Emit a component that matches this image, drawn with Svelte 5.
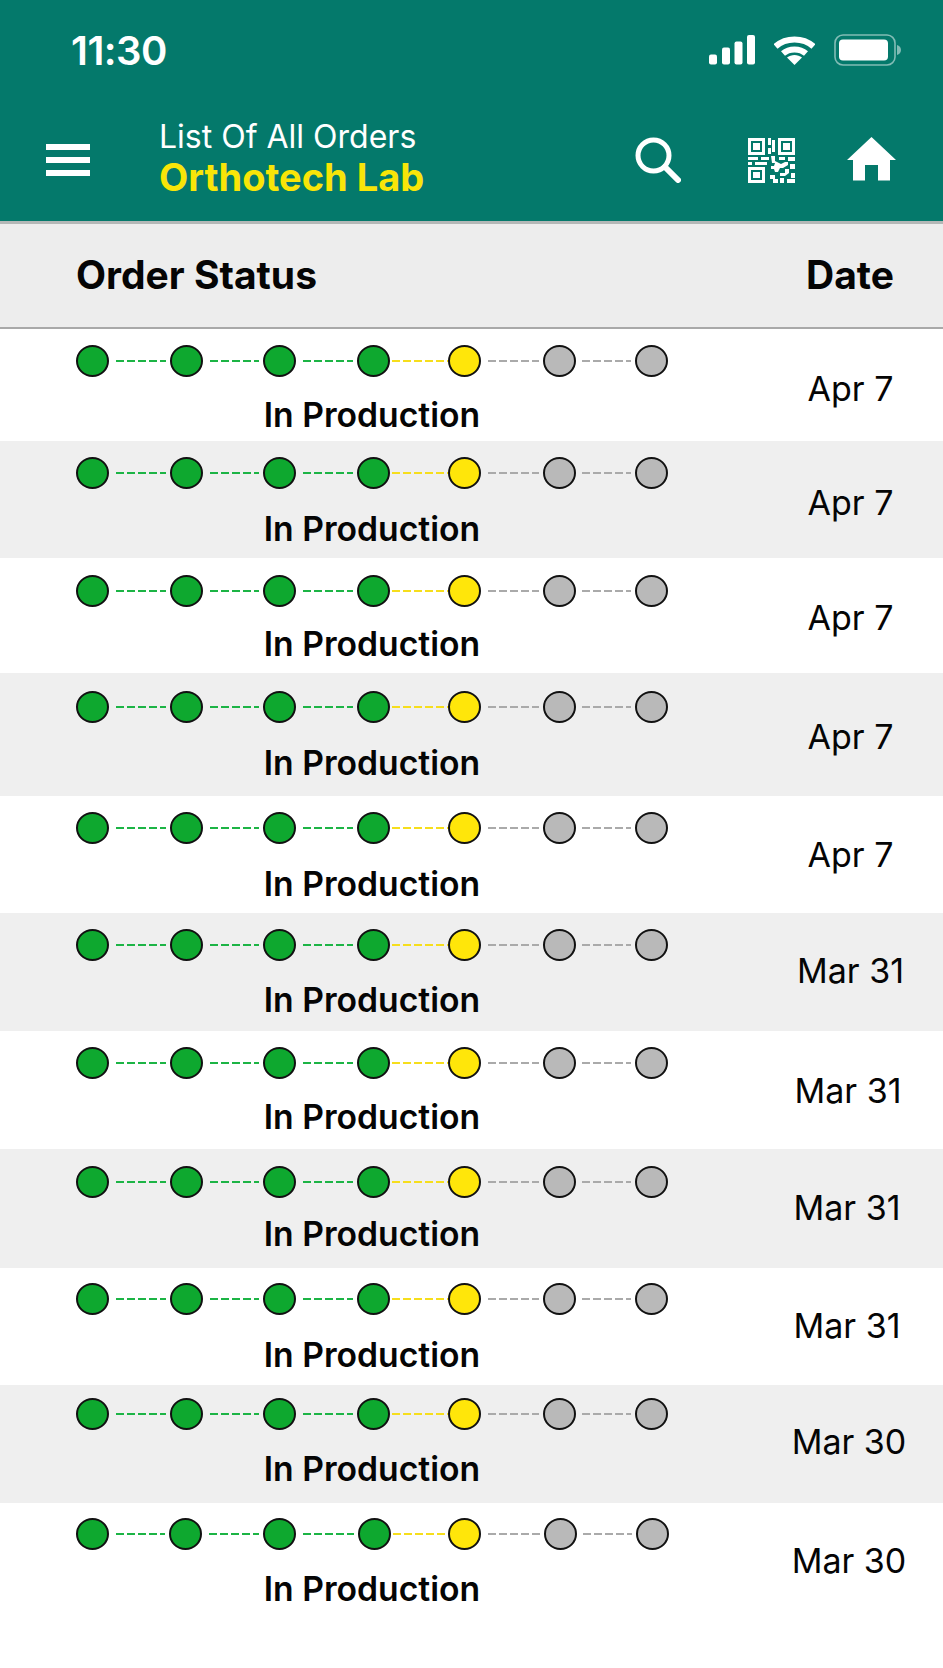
<script>
  const green = 'green', yellow = 'yellow', grey = 'grey';
  const dots = [green, green, green, green, yellow, grey, grey];
  const links = [
    { kind: green, w: 50, l: 7, r: 4 },
    { kind: green, w: 49, l: 7, r: 4 },
    { kind: green, w: 50, l: 7, r: 4 },
    { kind: yellow, w: 56, l: 2, r: 0 },
    { kind: grey, w: 51, l: 7, r: 4 },
    { kind: grey, w: 49, l: 6, r: 4 }
  ];
  // The last row's stepper sits a touch wider in the source capture.
  const lastLinks = [
    { kind: green, w: 49, l: 7, r: 4 },
    { kind: green, w: 50, l: 7, r: 4 },
    { kind: green, w: 51, l: 7, r: 4 },
    { kind: yellow, w: 55, l: 2, r: 0 },
    { kind: grey, w: 52, l: 7, r: 4 },
    { kind: grey, w: 49, l: 6, r: 4 }
  ];
  // h: row height, dot: stepper offset, label: stepper-to-label distance,
  // dateY: centre of the date from row top, dx: horizontal drift of the date
  const rows = [
    { h: 112, dot: 16, label: 54, date: 'Apr 7', dateY: 60, dx: 0.5 },
    { h: 117, dot: 16, label: 56, date: 'Apr 7', dateY: 62, dx: 0.5 },
    { h: 115, dot: 17, label: 53, date: 'Apr 7', dateY: 60, dx: 0.5 },
    { h: 123, dot: 18, label: 56, date: 'Apr 7', dateY: 64, dx: 0.5 },
    { h: 117, dot: 16, label: 56, date: 'Apr 7', dateY: 59, dx: 0.5 },
    { h: 118, dot: 16, label: 55, date: 'Mar 31', dateY: 58, dx: 0.5 },
    { h: 118, dot: 16, label: 54, date: 'Mar 31', dateY: 60, dx: -2 },
    { h: 119, dot: 17, label: 52, date: 'Mar 31', dateY: 59, dx: -3 },
    { h: 117, dot: 15, label: 56, date: 'Mar 31', dateY: 58, dx: -3 },
    { h: 118, dot: 13, label: 55, date: 'Mar 30', dateY: 57, dx: -1 },
    { h: 165, dot: 15, label: 55, date: 'Mar 30', dateY: 58, dx: -1 }
  ];
  const DOT_H = 32;
  const LABEL_LH = 40;
  const DATE_LH = 44;
</script>

<div class="page">
  <header class="appbar">
    <div class="statusbar">
      <span class="time">11:30</span>
      <div class="sysicons">
        <svg class="signal" width="46" height="30" viewBox="0 0 46 30" aria-hidden="true">
          <rect x="0" y="19.5" width="8" height="10" rx="2" />
          <rect x="13" y="12.5" width="8" height="17" rx="2" />
          <rect x="25.5" y="6.5" width="8" height="23" rx="2" />
          <rect x="38" y="0" width="8" height="29.5" rx="2" />
        </svg>
        <svg class="wifi" width="41" height="30" viewBox="0 0 41 30" aria-hidden="true">
          <path d="M1.500 11.500C11.800 2 29.200 2 39.500 11.500" fill="none" stroke="#fff" stroke-width="6" />
          <path d="M9 18.500C15.200 13 25.800 13 32 18.500" fill="none" stroke="#fff" stroke-width="6" />
          <path d="M13 22.500C17.200 19 23.800 19 28 22.500L20.500 30Z" fill="#fff" />
        </svg>
        <svg class="battery" width="67" height="32" viewBox="0 0 67 32" aria-hidden="true">
          <rect x="1" y="1" width="60" height="30" rx="8" fill="none" stroke="#fff" stroke-opacity=".5" stroke-width="1.6" />
          <rect x="5" y="5.500" width="49" height="21" rx="4" fill="#fff" />
          <path d="M63 11c2.400.6 4 2.600 4 5s-1.600 4.400-4 5Z" fill="#fff" fill-opacity=".5" />
        </svg>
      </div>
    </div>
    <nav class="navbar">
      <div class="burger" aria-label="Menu"><i></i><i></i><i></i></div>
      <div class="titles">
        <div class="title">List Of All Orders</div>
        <div class="subtitle">Orthotech Lab</div>
      </div>
      <div class="actions">
        <svg class="search" width="46" height="46" viewBox="0 0 46 46" aria-hidden="true">
          <circle cx="18.500" cy="18.500" r="15.500" fill="none" stroke="#fff" stroke-width="5" />
          <path d="M30 30L43 43" fill="none" stroke="#fff" stroke-width="6" stroke-linecap="round" />
        </svg>
        <svg class="qr" width="48" height="46" viewBox="0 0 48 46" fill="#fff" aria-hidden="true">
          <path fill-rule="evenodd" d="M1 1h17v17H1ZM4 4v11h11V4Z" />
          <rect x="6" y="6" width="7" height="7" />
          <path fill-rule="evenodd" d="M31 1h17v17H31ZM34 4v11h11V4Z" />
          <rect x="36" y="6" width="7" height="7" />
          <path fill-rule="evenodd" d="M1 30h17v16H1ZM4 33v10h11V33Z" />
          <rect x="6" y="35" width="7" height="6" />
          <rect x="21" y="1" width="3" height="7" />
          <rect x="25" y="3" width="3" height="12" />
          <rect x="21" y="11" width="3" height="6" />
          <rect x="1" y="20" width="10" height="3" />
          <rect x="14" y="20" width="8" height="3" />
          <rect x="1" y="25" width="4" height="3" />
          <rect x="8" y="25" width="12" height="3" />
          <path d="M24 19h4v5l6 3 4-2h3v3l-5 3h-3l-2 4h-3l-1-3h-3v-3h3l1-3h-3Z" />
          <rect x="32" y="20" width="6" height="3" />
          <rect x="41" y="20" width="7" height="4" />
          <rect x="43" y="27" width="5" height="5" />
          <path d="M38 32h4v4l-4 3h-5v-3h5Z" />
          <rect x="23" y="38" width="5" height="4" />
          <rect x="26" y="42" width="5" height="4" />
          <rect x="33" y="41" width="4" height="5" />
          <rect x="40" y="42" width="8" height="4" />
          <rect x="44" y="36" width="4" height="5" />
        </svg>
        <svg class="home" width="49" height="44" viewBox="0 0 49 44" fill="#fff" aria-hidden="true">
          <path d="M24.500 0L49 23H43V43.500H31V28H18V43.500H6V23H0Z" />
        </svg>
      </div>
    </nav>
  </header>

  <div class="tablehead">
    <span class="th-status">Order Status</span>
    <span class="th-date">Date</span>
  </div>

  {#each rows as row, r}
    {@const rowLinks = r === rows.length - 1 ? lastLinks : links}
    <div class="row" style="height:{row.h}px">
      <div class="status" style="padding-top:{row.dot}px">
        <div class="stepper">
          {#each dots as kind, i}
            <span class="dot {kind}"></span>
            {#if i < rowLinks.length}
              <span
                class="link {rowLinks[i].kind}"
                style="width:{rowLinks[i].w}px;margin:0 {rowLinks[i].r}px 0 {rowLinks[i].l}px"
              ></span>
            {/if}
          {/each}
        </div>
        <div class="label" style="margin-top:{row.label - DOT_H / 2 - LABEL_LH / 2}px">In Production</div>
      </div>
      <div class="datecell">
        <span class="date" style="margin:{row.dateY - DATE_LH / 2}px 0 0 {row.dx * 2}px">{row.date}</span>
      </div>
    </div>
  {/each}
</div>

<style>
  :global(body) {
    margin: 0;
    background: #fff;
  }
  .page {
    width: 943px;
    height: 1668px;
    overflow: hidden;
    font-family: Inter, "Liberation Sans", sans-serif;
    color: #050505;
  }
  .appbar {
    height: 221px;
    background: #04796b;
    border-bottom: 3px solid #b4b8b7;
    color: #fff;
  }
  .statusbar {
    height: 100px;
    display: flex;
    justify-content: space-between;
    align-items: flex-start;
    padding: 29px 42px 0 71px;
    box-sizing: border-box;
  }
  .time {
    font-size: 40px;
    line-height: 44px;
    font-weight: 600;
    letter-spacing: -0.5px;
  }
  .sysicons {
    display: flex;
    align-items: flex-start;
    padding-top: 5px;
  }
  .signal {
    fill: #fff;
    margin-right: 19px;
    margin-top: 1px;
  }
  .wifi {
    margin-right: 19px;
    margin-top: 1px;
  }
  .navbar {
    height: 121px;
    display: flex;
    align-items: flex-start;
  }
  .burger {
    width: 44px;
    margin: 44px 0 0 46px;
    display: flex;
    flex-direction: column;
    gap: 7px;
  }
  .burger i {
    display: block;
    height: 6px;
    background: #fff;
  }
  .titles {
    margin: 17px 0 0 69px;
    width: 380px;
  }
  .title {
    font-size: 32px;
    line-height: 40px;
    font-weight: 400;
  }
  .subtitle {
    font-size: 38px;
    line-height: 40px;
    font-weight: 700;
    color: #f8e508;
  }
  .actions {
    display: flex;
    align-items: flex-start;
    padding-top: 37px;
    margin-left: 96px;
  }
  .search {
    margin-right: 66px;
  }
  .qr {
    margin-right: 52px;
  }
  .tablehead {
    height: 103px;
    background: #ededed;
    border-bottom: 2px solid #a9a9a9;
    display: flex;
    justify-content: space-between;
    align-items: center;
    padding: 0 49px 2px 76px;
    font-size: 39px;
    font-weight: 700;
    margin-bottom: 0;
    height: 101px;
  }
  .row {
    display: flex;
    background: #fff;
  }
  .row:nth-of-type(odd) {
    background: #efefef;
  }
  .status {
    width: 592px;
    margin-left: 76px;
    box-sizing: border-box;
  }
  .stepper {
    display: flex;
    align-items: center;
    height: 32px;
  }
  .dot {
    flex: none;
    width: 33px;
    height: 32px;
    border: 2px solid #111;
    border-radius: 50%;
    box-sizing: border-box;
  }
  .dot.green {
    background: #0ea82f;
  }
  .dot.yellow {
    background: #ffe60a;
  }
  .dot.grey {
    background: #b9b9b9;
  }
  .link {
    flex: none;
    height: 2px;
  }
  .link.green {
    background: repeating-linear-gradient(90deg, #1cb445 0 8px, transparent 8px 11px);
  }
  .link.yellow {
    background: repeating-linear-gradient(90deg, #f6de1c 0 8px, transparent 8px 11px);
  }
  .link.grey {
    background: repeating-linear-gradient(90deg, #aaa 0 8px, transparent 8px 11px);
  }
  .label {
    font-size: 33.7px;
    line-height: 40px;
    font-weight: 600;
    text-align: center;
  }
  .datecell {
    width: 186px;
    margin-left: 89px;
    display: flex;
    justify-content: center;
    align-items: flex-start;
  }
  .date {
    font-size: 34px;
    line-height: 44px;
    font-weight: 400;
    white-space: nowrap;
  }
</style>
